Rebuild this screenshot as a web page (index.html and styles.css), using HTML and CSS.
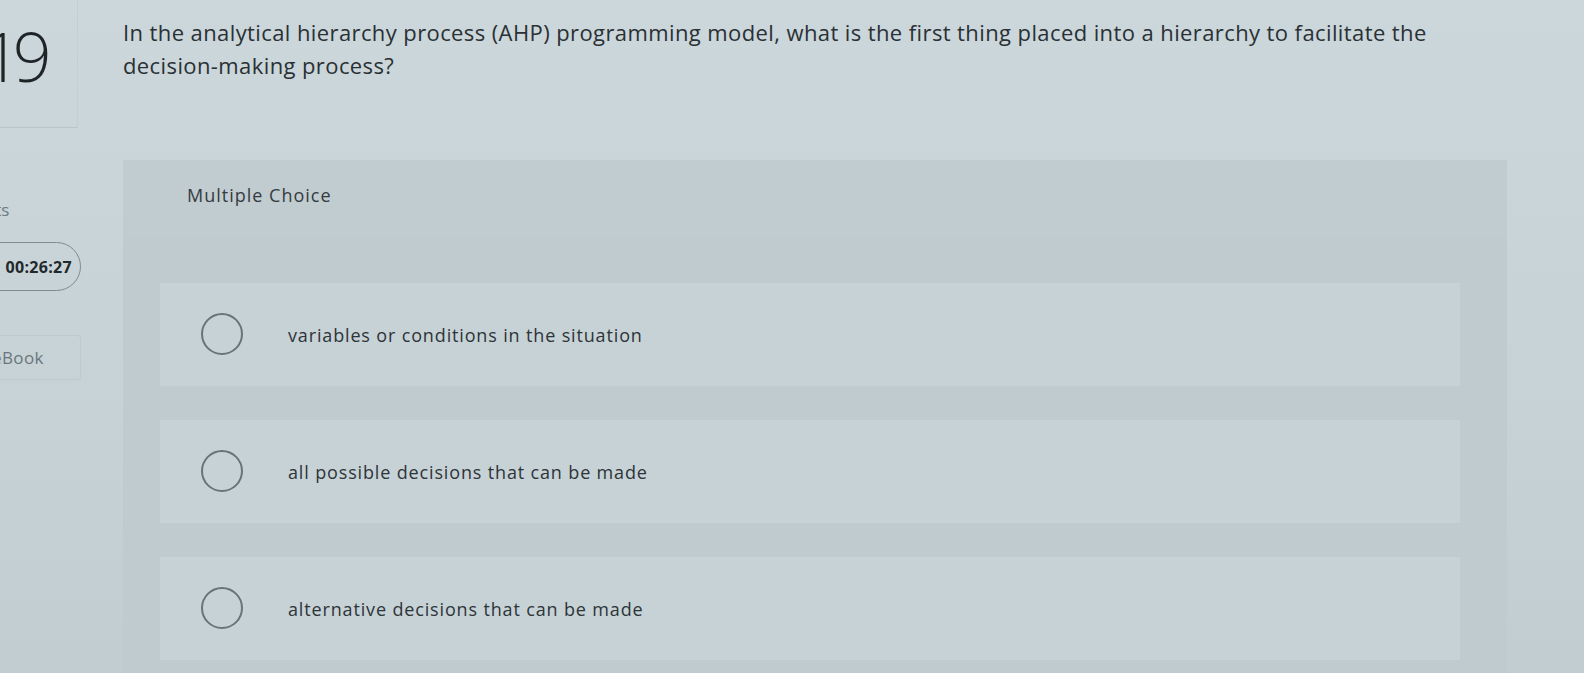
FILE: index.html
```html
<!DOCTYPE html>
<html lang="en">
<head>
<meta charset="utf-8">
<title>Multiple Choice Question</title>
<link rel="stylesheet" href="styles.css">
</head>
<body>
<div class="page">
  <aside class="sidebar">
    <div class="qnum-card"><span class="qnum">19</span></div>
    <div class="points">Points</div>
    <div class="timer">00:26:27</div>
    <div class="ebook">eBook</div>
  </aside>
  <main class="main">
    <p class="question">In the analytical hierarchy process (AHP) programming model, what is the first thing placed into a hierarchy to facilitate the decision-making process?</p>
    <section class="panel">
      <div class="panel-head">Multiple Choice</div>
      <div class="answers">
        <div class="answer"><span class="radio"></span><span class="answer-text">variables or conditions in the situation</span></div>
        <div class="answer"><span class="radio"></span><span class="answer-text">all possible decisions that can be made</span></div>
        <div class="answer"><span class="radio"></span><span class="answer-text">alternative decisions that can be made</span></div>
      </div>
    </section>
  </main>
</div>
</body>
</html>
```

FILE: styles.css
```css
html, body {
  margin: 0;
  padding: 0;
  height: 100%;
  overflow: hidden;
}
body {
  background: linear-gradient(180deg, #cbd7db 0%, #c6d2d6 60%, #c1cdd1 100%);
  font-family: "Open Sans", Lato, Arial, sans-serif;
  color: #2c3236;
}
.page {
  display: flex;
  align-items: flex-start;
  height: 673px;
}
.sidebar {
  flex: none;
  width: 121px;
  margin-left: -40px;
  margin-right: 42px;
  display: flex;
  flex-direction: column;
}
.qnum-card {
  height: 128px;
  border-bottom: 1px solid #b9c5c9;
  border-right: 1px solid #c3cfd3;
  box-sizing: border-box;
  padding-left: 22px;
  width: 118px;
}
.qnum {
  display: block;
  font-size: 68px;
  font-weight: 300;
  line-height: 1;
  padding-top: 22px;
  color: #1f2427;
  letter-spacing: -8px;
  white-space: nowrap;
}
.points {
  margin-top: 70px;
  font-size: 17px;
  color: #6d7a7e;
  text-align: right;
  padding-right: 108px;
  height: 23px;
  white-space: nowrap;
}
.timer {
  margin-top: 21px;
  height: 49px;
  box-sizing: border-box;
  border: 1.5px solid #7f8c8f;
  border-radius: 25px;
  display: flex;
  align-items: center;
  justify-content: flex-end;
  padding-right: 8px;
  font-size: 16px;
  font-weight: 700;
  color: #22282b;
  letter-spacing: 0.3px;
}
.ebook {
  margin-top: 44px;
  height: 45px;
  box-sizing: border-box;
  border: 1px solid #bdc9cd;
  border-radius: 3px;
  display: flex;
  align-items: center;
  padding-left: 31px;
  font-size: 17px;
  letter-spacing: 0.4px;
  color: #6b777b;
}
.main {
  flex: none;
  width: 1384px;
}
.question {
  margin: 16px 0 0 0;
  max-width: 1340px;
  font-size: 22px;
  line-height: 33px;
  letter-spacing: 0.4px;
  color: #2a3034;
}
.panel {
  margin-top: 78px;
  background: #bfcbcf;
  height: 520px;
}
.panel-head {
  height: 77px;
  box-sizing: border-box;
  padding: 23px 0 0 64px;
  font-size: 18px;
  letter-spacing: 1px;
  color: #353b3f;
  background: #c0ccd0;
}
.answers {
  margin-top: 46px;
  padding: 0 47px 0 37px;
  display: flex;
  flex-direction: column;
  gap: 34px;
}
.answer {
  height: 103px;
  background: #c6d2d6;
  display: flex;
  align-items: center;
  padding-left: 41px;
}
.radio {
  flex: none;
  width: 42px;
  height: 42px;
  box-sizing: border-box;
  border: 2px solid #6a7477;
  border-radius: 50%;
  margin-top: -2px;
}
.answer-text {
  margin-left: 45px;
  font-size: 18px;
  letter-spacing: 0.85px;
  color: #2e3438;
}
```
